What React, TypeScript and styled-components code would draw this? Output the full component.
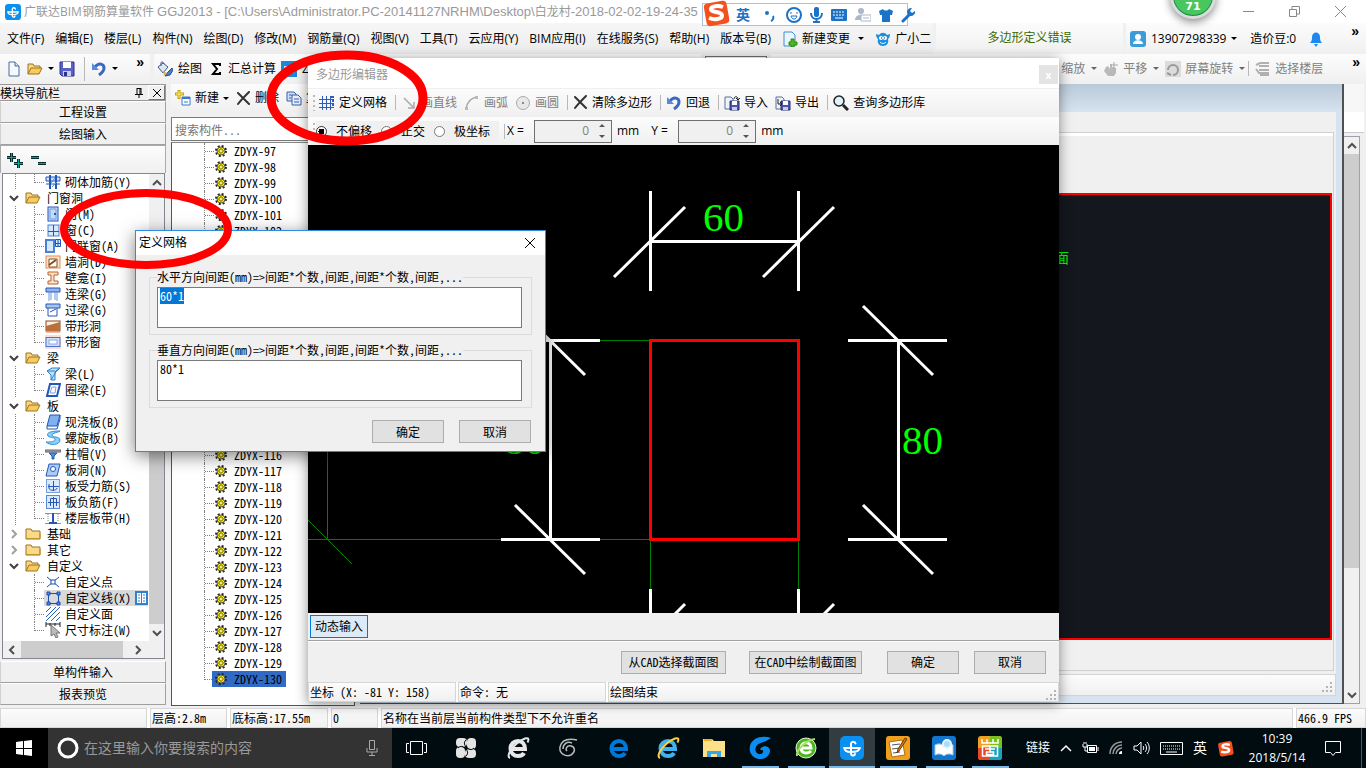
import React, { useEffect, useRef } from 'react';
import styled, { createGlobalStyle, css } from 'styled-components';

const UI = `"Open Sans", "Noto Sans CJK SC", sans-serif`;
const MONO = `"Noto Sans Mono CJK SC", "Noto Sans CJK SC", monospace`;

const GlobalStyle = createGlobalStyle`
  * { box-sizing: border-box; }
  body { margin: 0; background: #f0f0f0; font: 12px/16px ${UI}; color: #000; overflow: hidden; }
  button, input, textarea, select { font: inherit; color: inherit; margin: 0; padding: 0; border: 0; border-radius: 0; background: none; }
  svg { display: block; flex: none; }
`;

/* ---------- shell ---------- */
const Page = styled.div`
  position: relative; display: flex; flex-direction: column; min-height: 100vh; width: 100%;
  white-space: nowrap; overflow: hidden;
`;
const TitleBar = styled.header`
  display: flex; align-items: center; height: 23px; padding: 0 20px 0 5px; gap: 3px; background: #fff; color: #999;
`;
const TitleText = styled.h1`
  flex: 1; margin: 0; font: 12px/20px ${UI}; overflow: hidden;
`;
const Path = styled.span` font-family: "Liberation Sans", sans-serif; font-size: 13px; `;
const WindowButtons = styled.div` display: flex; gap: 35px; button { display: block; } `;

const MenuBar = styled.nav`
  display: flex; align-items: stretch; height: 31px; background: #f0f0f0; gap: 3px;
`;
const strip = css` background: linear-gradient(#fcfcfc, #f0f0f0); `;
const MenuList = styled.div`
  display: flex; flex: 1; align-items: center; gap: 11px; padding: 0 0 0 7px; background: linear-gradient(#f6f6f6, #ececec);
`;
const MenuItem = styled.button` display: flex; align-items: center; gap: 4px; `;
const MessageBox = styled.output` ${strip} width: 187px; padding-top: 7px; text-align: center; color: #3a6a00; `;
const AccountBox = styled.div` ${strip} position: relative; display: flex; align-items: center; width: 240px; padding: 0 7px 0 4px; gap: 5px; `;
const Spacer = styled.span` flex: 1; `;
const More = styled.button` align-self: flex-start; font: bold 14px/16px "Liberation Sans"; `;

const ToolBar = styled.div` display: flex; align-items: stretch; height: 29px; gap: 4px; background: #f0f0f0; `;
const ToolGroup = styled.div<{ $w?: number; $grow?: boolean; $gap?: number; $pad?: number }>`
  ${strip} display: flex; align-items: center; gap: ${p => p.$gap ?? 5}px; padding: 0 6px 0 ${p => p.$pad ?? 6}px;
  width: ${p => (p.$w ? `${p.$w}px` : 'auto')}; flex: ${p => (p.$grow ? '1' : 'none')}; overflow: hidden;
`;
const Tool = styled.button<{ $off?: boolean }>`
  display: flex; align-items: center; gap: 4px; height: 22px; padding: 0 3px; color: ${p => (p.$off ? '#808080' : '#000')};
`;
const Sep = styled.span<{ $h?: number; $tight?: boolean }>`
  width: 1px; height: ${p => p.$h ?? 15}px; margin: ${p => (p.$tight ? '0' : '0 1px 0 4px')}; background: #b8b8b8;
`;
const FloorSelect = styled.select` align-self: flex-start; width: 62px; height: 22px; margin-top: 2px; border: 1px solid #707070; background: #fff; `;

const Main = styled.main` display: flex; flex: 1; min-height: 0; gap: 5px; padding-top: 1px; `;

/* ---------- navigation panel ---------- */
const NavPanel = styled.aside` display: flex; flex-direction: column; width: 166px; flex: none; padding-bottom: 3px; `;
const NavHeader = styled.div`
  display: flex; align-items: center; height: 17px; border: 1px solid #999; border-left: 0; gap: 4px; font-family: ${MONO};
`;
const PanelTitle = styled.h2` flex: 1; margin: 0; font: 12px/14px ${MONO}; `;
const NavClose = styled.button` width: 17px; height: 15px; border: 1px solid #777; border-top-color: #fff; border-left-color: #fff; display: grid; place-items: center; `;
const NavTab = styled.button`
  height: 22px; flex: none; border: 1px solid #a0a0a0; border-top-color: #fff; border-left-color: #d0d0d0; font: 12px/18px ${MONO}; background: #f0f0f0;
`;
const NavTools = styled.div` display: flex; align-items: center; gap: 6px; height: 28px; padding-left: 6px; border: 1px solid #aaa; border-width: 1px 1px 0; ${strip} `;
const TreeBox = styled.div`
  display: flex; flex-direction: column; flex: 1; margin: 0 1px 2px 2px; border: 1px solid #828790; background: #fff; overflow: hidden;
`;
const TreeBody = styled.div` display: flex; flex: 1; min-height: 0; `;
const Tree = styled.ul` flex: 1; margin: 0; padding: 0; list-style: none; overflow: hidden; font: 12px/16px ${MONO}; `;
const Leaf = styled.li<{ $trunk?: boolean }>`
  display: flex; height: 16px; padding-left: 31px; align-items: flex-start;
  background: ${p => (p.$trunk ? 'repeating-linear-gradient(#808080 0 1px, #fff 1px 2px) 12px 0 / 1px 16px no-repeat' : 'none')};
`;
const Branch = styled.span<{ $last?: boolean; $w: number }>`
  width: ${p => p.$w}px; height: ${p => (p.$last ? 9 : 16)}px; flex: none; border-left: 1px dotted #808080;
  background: repeating-linear-gradient(90deg, #808080 0 1px, #fff 1px 2px) 0 8px / 100% 1px no-repeat;
`;
const LeafLabel = styled.span<{ $on?: boolean }>`
  display: flex; align-items: center; height: 16px; gap: 4px; padding-left: 1px; background: ${p => (p.$on ? '#d9d9d9' : 'none')};
`;
const Group = styled.li` display: flex; align-items: center; height: 16px; padding-left: 6px; gap: 6px; `;
const VScroll = styled.div` display: flex; flex-direction: column; width: 15px; background: #f0f0f0; `;
const HScroll = styled.div` display: flex; height: 17px; padding-right: 17px; background: #f0f0f0; `;
const ScrollArrow = styled.button<{ $w?: number }>` display: grid; place-items: center; width: ${p => p.$w ?? 15}px; height: 17px; `;
const Thumb = styled.span<{ $grow: number }>` flex: ${p => p.$grow}; background: #cdcdcd; `;
const Gap = styled.span<{ $grow: number }>` flex: ${p => p.$grow}; `;

/* ---------- component list ---------- */
const ListPanel = styled.section` display: flex; flex-direction: column; width: 184px; flex: none; padding-bottom: 2px; `;
const ListTools = styled.div` ${strip} display: flex; align-items: center; height: 28px; gap: 1px; margin-bottom: 5px; padding-left: 1px; `;
const Search = styled.input` height: 24px; margin-bottom: 1px; padding: 0 3px; border: 1px solid #7a7a7a; background: #fff; font: 12px/16px ${MONO}; &::placeholder { color: #777; opacity: 1; } `;
const ListBox = styled.ul` flex: 1; margin: 0; padding: 0 0 0 32px; list-style: none; border: 1px solid #555; border-top-color: #888; background: #fff; overflow: hidden; font: 12px/16px ${MONO}; `;
const ListRow = styled.li` display: flex; height: 16px; `;
const ListLabel = styled.span<{ $on?: boolean }>`
  display: flex; align-items: center; gap: 7px; padding: 0 4px 0 3px; margin-left: -3px; height: 16px; background: ${p => (p.$on ? '#316ac5' : 'none')};
`;

/* ---------- workspace behind the dialogs ---------- */
const Workspace = styled.section` display: flex; flex: 1; padding-bottom: 4px; `;
const InnerWindow = styled.div` display: flex; flex-direction: column; flex: 1; border-right: 2px solid #505050; border-bottom: 1px solid #505050; background: #d7e3f0; `;
const InnerTitle = styled.div` height: 28px; background: linear-gradient(#bac9d8, #d6e3f0); `;
const InnerBody = styled.div` display: flex; flex: 1; flex-direction: column; margin-right: 6px; padding: 20px 2px 3px 0; background: #f0f0f0; `;
const InnerFrame = styled.div` display: flex; flex: 1; padding: 60px 1px 30px 0; border: 1px solid #d0d0d0; border-left: 0; box-shadow: inset 0 3px #fff; `;
const SectionView = styled.div` flex: 1; border: 2px solid #f00; background: #14171e; color: #0f0; font: 14px/16px ${MONO}; text-align: right; padding: 54px 261px 0 0; `;
const InnerStatus = styled.div` ${strip} display: flex; justify-content: flex-end; align-items: flex-end; height: 22px; margin: 0 6px 7px 0; padding: 2px; border: 1px solid #d4d4d4; `;
const SideColumn = styled.div` display: flex; flex-direction: column; width: 22px; padding-right: 2px; `;
const SideTop = styled.div` height: 49px; border-bottom: 1px solid #ccc; background: linear-gradient(#f7f7f7 28px, #fff 28px); `;
const SideScroll = styled.div` display: flex; flex: 1; flex-direction: column; align-items: stretch; margin: 3px 4px 0 0; border: 1px solid #a0a0a8; border-left: 0; background: #f0f0f0; `;

/* ---------- status bars ---------- */
const StatusBar = styled.footer` display: flex; height: 20px; gap: 3px; background: #fff; font: 12px/18px ${MONO}; `;
const Cell = styled.div<{ $w?: number }>`
  ${strip} width: ${p => (p.$w ? `${p.$w}px` : 'auto')}; flex: ${p => (p.$w ? 'none' : '1')}; padding-left: 1px; border: 1px solid #d6d6d6; overflow: hidden;
`;

/* ---------- dialogs ---------- */
const Editor = styled.section`
  position: absolute; left: 308px; top: 58px; width: 751px; display: flex; flex-direction: column; background: #f0f0f0; box-shadow: 0 2px 12px rgba(0,0,0,.45);
`;
const EditorTitle = styled.div` display: flex; align-items: center; height: 30px; padding: 3px 1px 0 8px; background: #fff; color: #999; `;
const DialogTitle = styled.h2` flex: 1; margin: 0; font: 12px/16px ${UI}; `;
const EditorClose = styled.button` width: 19px; height: 19px; background: #e4e4e4; color: #fff; font: bold 10px/14px ${UI}; `;
const EditorBar = styled.div<{ $h: number }>`
  ${strip} display: flex; align-items: center; height: ${p => p.$h}px; padding-left: 5px; gap: 1px; border-top: 1px solid #f0f0f0;
`;
const Grip = styled.span` width: 2px; height: 16px; background: repeating-linear-gradient(#bbb 0 2px, transparent 2px 5px); `;
const Radios = styled.div` display: flex; align-items: center; height: 20px; width: 183px; gap: 9px; padding: 0; background: #f0f0f0; font-family: ${MONO}; `;
const RadioLabel = styled.label` display: flex; align-items: center; gap: 9px; `;
const Radio = styled.input.attrs({ type: 'radio' })`
  appearance: none; width: 11px; height: 11px; border: 1px solid #777; border-radius: 50%; background: #fff;
  &:checked { background: radial-gradient(#000 0 3px, #fff 3px); border-color: #333; }
`;
const Coord = styled.label` display: flex; align-items: center; gap: 5px; `;
const CoordName = styled.span` width: 22px; `;
const SpinBox = styled.span` display: flex; align-items: center; width: 78px; height: 23px; padding-right: 5px; border: 1px solid #707070; background: #f0f0f0; `;
const SpinInput = styled.input` flex: 1; min-width: 0; text-align: right; padding-right: 10px; color: #808080; `;
const DynamicRow = styled.div` display: flex; align-items: flex-start; height: 28px; padding: 2px; border-bottom: 1px solid #a0a0a0; `;
const DynamicButton = styled.button` width: 58px; height: 23px; border: 1px solid #0078d7; background: #dcebf7; `;
const ButtonRow = styled.div` display: flex; align-items: center; justify-content: flex-end; height: 41px; padding: 0 13px 0 0; border-top: 1px solid #fff; `;
const PushButton = styled.button<{ $w: number; $gap?: number }>`
  width: ${p => p.$w}px; height: 23px; margin-left: ${p => p.$gap ?? 15}px; border: 1px solid #adadad; background: #e1e1e1; font: 12px/18px ${MONO};
`;
const EditorStatus = styled.div` position: relative; display: flex; gap: 2px; height: 20px; background: #fff; font: 12px/18px ${MONO}; white-space: pre; `;
const CornerGrip = styled.span` position: absolute; right: 2px; bottom: 1px; `;

const GridDialog = styled.form`
  position: absolute; left: 135px; top: 230px; width: 411px; border: 1px solid #2d8ce0; background: #f0f0f0; box-shadow: 0 4px 16px rgba(0,0,0,.5);
`;
const GridTitle = styled.div` display: flex; align-items: center; height: 24px; padding: 0 10px 0 3px; background: #fff; `;
const GridBody = styled.div` padding: 14px 13px 8px; `;
const Field = styled.fieldset` height: 66px; margin: 0 0 7px; padding: 2px 9px 0 7px; border: 1px solid #dcdcdc; min-width: 0;
  legend { padding: 0; font: 12px/16px ${MONO}; } `;
const Area = styled.textarea`
  display: block; width: 100%; height: 41px; padding: 0 2px; border: 1px solid #7a7a7a; background: #fff; resize: none; outline: none; font: 12px/16px ${MONO};
  &::selection { background: #0078d7; color: #fff; }
`;
const GridButtons = styled.div` display: flex; justify-content: flex-end; padding: 5px 1px 0 0; `;

/* ---------- floating items ---------- */
const Marks = styled.svg` position: absolute; left: 0; top: 0; pointer-events: none; `;
const ImeBar = styled.div`
  position: absolute; left: 702px; top: 3px; display: flex; align-items: center; gap: 8px; height: 23px; width: 206px; padding-left: 33px;
  border: 1px solid #a9c3dd; background: #fff; color: #1c72c6; font: bold 14px/20px ${UI};
`;
const ImeLogo = styled.span` position: absolute; left: -1px; top: -5px; `;
const Ball = styled.div`
  position: absolute; left: 1170px; top: -27px; width: 46px; height: 46px; border: 3px solid #d9dcdc; border-radius: 50%; background: #48c75e;
  box-shadow: inset 0 0 0 1px #1e8a4d, 0 3px 8px rgba(0,0,0,.45); color: #fff; font: bold 11px/16px "DejaVu Sans"; text-align: center; padding-top: 23px;
`;

/* ---------- task bar ---------- */
const TaskBar = styled.footer` display: flex; height: 40px; background: #000c10; color: #fff; `;
const StartButton = styled.button` display: grid; place-items: center; width: 48px; background: #000; `;
const TaskSearch = styled.label` display: flex; align-items: center; width: 344px; padding: 0 14px 0 9px; gap: 5px; background: #333; `;
const TaskInput = styled.input` flex: 1; min-width: 0; font: 14px/20px ${UI}; outline: none; &::placeholder { color: #999; opacity: 1; } `;
const TaskIcon = styled.button<{ $w?: number; $open?: boolean; $on?: boolean }>`
  display: flex; flex-direction: column; align-items: center; justify-content: center; width: ${p => p.$w ?? 46}px; padding-top: 2px;
  border-bottom: 2px solid transparent; background: ${p => (p.$on ? '#333c40' : 'none')};
  background-image: ${p => (p.$open ? 'linear-gradient(#76b9ed, #76b9ed)' : 'none')};
  background-size: ${p => (p.$on ? '46px' : '37px')} 2px; background-position: 50% 100%; background-repeat: no-repeat; background-origin: border-box; background-clip: border-box;
`;
const Tray = styled.div` display: flex; align-items: center; gap: 10px; `;
const TrayIme = styled.span` font-size: 14px; `;
const Clock = styled.time` display: flex; flex-direction: column; width: 66px; margin-right: 5px; text-align: center; line-height: 19px; `;
const ShowDesktop = styled.button` width: 5px; margin-left: 9px; border-left: 1px solid #555; align-self: stretch; `;
const Room = styled.span<{ $w: number }>` width: ${p => p.$w}px; flex: none; `;

/* ---------- small icons ---------- */
const Svg = ({ w = 16, h = 16, children, ...rest }: { w?: number; h?: number; children: React.ReactNode } & React.SVGProps<SVGSVGElement>) => (
  <svg width={w} height={h} viewBox={`0 0 ${w} ${h}`} fill="none" aria-hidden="true" {...rest}>{children}</svg>
);
const Tri = ({ c = '#000' }: { c?: string }) => <Svg w={6} h={3}><path d="M0 0h6L3 3z" fill={c} /></Svg>;
const Chevron = ({ d, c = '#505050' }: { d: 'up' | 'down' | 'left' | 'right'; c?: string }) => {
  const p = { up: 'M1 7l4-4 4 4', down: 'M1 3l4 4 4-4', left: 'M7 1L3 5l4 4', right: 'M3 1l4 4-4 4' }[d];
  return <Svg w={10} h={10}><path d={p} stroke={c} strokeWidth="2" /></Svg>;
};
const Cross = ({ s = 10, w = 1, c = '#000' }: { s?: number; w?: number; c?: string }) => (
  <Svg w={s} h={s}><path d={`M0 0L${s} ${s}M${s} 0L0 ${s}`} stroke={c} strokeWidth={w} /></Svg>
);
const BigX = () => <Svg w={15} h={15}><path d="M2 2l11 11M13 1C9 5 5 9 2 13" stroke="#333" strokeWidth="2" strokeLinecap="round" /></Svg>;
const Undo = () => <Svg><path d="M4 6c4-5 9-3 9 1 0 3-2 5-5 7" stroke="#3a68c0" strokeWidth="3" /><path d="M1 2v7h7z" fill="#5a8ae0" /></Svg>;
const Dots = () => (
  <Svg w={11} h={11}><path d="M8 0h2v2h-2zM4 4h2v2h-2zM8 4h2v2h-2zM0 8h2v2h-2zM4 8h2v2h-2zM8 8h2v2h-2z" fill="#b4b4b4" /></Svg>
);
const Glodon = ({ s }: { s: number }) => (
  <svg width={s} height={s} viewBox="0 0 24 24" fill="none" aria-hidden="true">
    <rect width="24" height="24" rx="5" fill="#0a90f0" />
    <path d="M11 18V7.500a2.300 2.300 0 0 1 4.500 0M4 12h16M4.500 12c0 3 3 4 6.500 4s8.500 0 8.500-4M11 16v1a2 2 0 0 0 4 1" stroke="#fff" strokeWidth="2" strokeLinecap="round" />
  </svg>
);
const PageIcon = () => <Svg><path d="M3 1h6l4 4v10H3z" fill="#f4f8ff" stroke="#4a6a9c" /><path d="M9 1v4h4" stroke="#4a6a9c" fill="#cfe0f5" /></Svg>;
const FolderOpen = () => (
  <Svg><path d="M1 13V3h5l1 2h6v2" fill="#f6d98a" stroke="#9a7420" /><path d="M1 13l3-6h11l-3 6z" fill="#f9c95a" stroke="#9a7420" /></Svg>
);
const FolderShut = () => <Svg><path d="M1 13V3h5l1 2h8v8z" fill="#fbd98b" stroke="#9a7420" /><path d="M2 12.500h13V7" stroke="#c99320" strokeWidth="1" /></Svg>;
const Save = () => (
  <Svg><path d="M1 1h14v14H3l-2-2z" fill="#5a62c8" stroke="#2a3188" /><path d="M4 1h8v6H4z" fill="#fff" /><path d="M4 10h8v5H4z" fill="#c8ccf0" /><path d="M5 11h3v4H5z" fill="#2a3188" /></Svg>
);
const Bucket = () => (
  <Svg><path d="M1 6l5-4 5 4-5 6z" fill="#dde6f2" stroke="#3a5a8c" /><path d="M4 5V2c0-2 3-1 3 1" stroke="#3a5a8c" /><path d="M15 7l-4 4-3 4 5-1 3-5z" fill="#4a7ed0" stroke="#2a4a8c" /><path d="M6 10l4 2-3 3z" fill="#e8b040" /></Svg>
);
const DiskArrow = ({ out }: { out?: boolean }) => (
  <Svg><path d="M1 2h6l2 2v10H1z" fill="#eef3fa" stroke="#5a7098" /><path d="M6 6h9v9H6z" fill="#4a55a8" stroke="#2a3170" /><path d="M8 6h5v4H8z" fill="#fff" /><path d="M8 12h5v3H8z" fill="#c8ccf0" /><path d={out ? 'M3 4v5h4M5 7l2 2-2 2' : 'M10 4c0-3 4-3 4 0M12 3l2 2 2-2'} stroke="#222" /></Svg>
);
const GridIcon = () => (
  <Svg><path d="M3.500 1v14M7.500 1v14M11.500 1v14M0 4.500h15M0 8.500h15M0 12.500h15" stroke="#2f5cb8" /><path d="M12 2h3M13 6h2M13 10h2" stroke="#2f5cb8" strokeWidth="2" /></Svg>
);
const Gear = () => (
  <Svg w={12} h={12}>
    <circle cx="6" cy="6" r="5" stroke="#222" strokeWidth="2" strokeDasharray="2 1.930" /><circle cx="6" cy="6" r="4" fill="#ffee00" stroke="#555" />
    <path d="M6 3v6M3 6h6" stroke="#6a6000" /><path d="M4 4l4 4M8 4l-4 4" stroke="#a89800" /><circle cx="6" cy="6" r="1" fill="#fff" />
  </Svg>
);
const PlusMinus = ({ minus }: { minus?: boolean }) => (
  <Svg w={17} h={16}>
    {([['#002c2c', 3], ['#00a89c', 1]] as const).map(([c, w]) => (
      <path key={c} d={minus ? 'M1 5.500h8M8 11.500h8' : 'M0 5.500h9M4.500 1v9M7 11.500h9M11.500 7v9'} stroke={c} strokeWidth={w} />
    ))}
  </Svg>
);

const B = '#2456b8';
const leafIcons: Record<string, React.ReactNode> = {
  wall: <><path d="M1 3h14v4H1zM1 10h14" fill="#cfe0fa" stroke={B} /><path d="M5 1v14M11 1v14" stroke={B} strokeWidth="2" /><path d="M6 9l4-5M7 13l5-5" stroke="#4a90e0" /></>,
  door: <><rect x="3" y="1" width="10" height="14" fill="#c5dcf7" stroke={B} /><path d="M5 3h6v10H5z" stroke="#6d9fe0" /><path d="M9 8h2" stroke={B} strokeWidth="2" /></>,
  window: <><rect x="3" y="3" width="11" height="11" fill="#d5e8fc" stroke="#4a80d8" /><path d="M8.500 3v11M3 9.500h11" stroke={B} strokeWidth="1" /></>,
  doorwin: <><rect x="1" y="2" width="8" height="12" fill="#d5e8fc" stroke="#4a80d8" strokeWidth="2" /><path d="M10.500 1.500h5v7h-5zM10 5.500h5M13 2v7" fill="#d5e8fc" stroke={B} /></>,
  hole: <><rect x="1" y="2" width="14" height="12" fill="#fae3cf" stroke="#e08a50" /><path d="M4 5h8v8H4z" fill="#fff" stroke="#8a4a1a" /><path d="M4 11l7-5" stroke="#8a4a1a" strokeWidth="2" /></>,
  niche: <path d="M3 2h10v3H9v6h4v3H3v-3h3V5H3z" fill="#fbe4cc" stroke="#b8622a" />,
  lintel: <><path d="M1 2h14v4H1z" fill="#8fb4ee" stroke={B} /><path d="M4 6v9M12 6v9M6 6v8M10 6v8" stroke="#6a98e0" /></>,
  beam2: <><path d="M1 2h14v4H1z" fill="#a8c6f4" stroke={B} /><path d="M3 6v8h9V6M5 10l6-3" stroke={B} /></>,
  striphole: <><rect x="1" y="3" width="14" height="10" fill="#fdf0e2" stroke="#8a4a1a" /><path d="M1 8l14-4v9H1z" fill="#b9713a" /><path d="M1 14.500h14" stroke="#f8b8a8" /></>,
  stripwin: <><rect x="0" y="1" width="16" height="14" fill="#fbdcd8" /><rect x="1" y="3.500" width="14" height="9" fill="#cfe0fa" stroke="#4a70d0" /><rect x="4" y="6" width="8" height="4" fill="#fff" stroke="#8aa8e8" /></>,
  beam: <><path d="M2 5l5-3h8l-5 4v8H6V9z" fill="#bfe0fa" stroke="#2f80c8" /><path d="M2 5h8M6 14l6-10M10 6l4-3" stroke="#2f80c8" /></>,
  ring: <><path d="M5 2h10l-3 12H2z" fill="#fff" stroke={B} strokeWidth="2" /><path d="M7 5h4l-1 6H5z" stroke="#7aa0e0" /></>,
  slab: <><path d="M5 1h10l-3 11H2z" fill="#7fb0f0" stroke={B} /><path d="M2 12v3h10l3-10V1" stroke={B} /></>,
  spiral: <path d="M15 1C5 1 1 3 3 6c2 2 8 1 7 4-1 2-5 2-9 2 4 4 14 3 14-2 0-4-8-2-8-5 0-2 5-2 8-4z" fill="#8fd0f8" stroke="#2f90d8" />,
  cap: <><path d="M0 4h16v2H0z" fill="#a8a8a8" stroke="#666" /><path d="M4 7h8l-3 3v3H7v-3z" fill="#4a90e0" stroke={B} /></>,
  slabhole: <><path d="M4 2h11l-3 12H1z" fill="#a9ccf8" stroke={B} /><circle cx="8" cy="7" r="2.500" fill="#fff" stroke={B} /></>,
  rebar: <><rect x="1.500" y="1.500" width="13" height="13" fill="#dce9fb" stroke="#7aa0e0" /><path d="M3 8.500h11M8.500 3v10M4 6v4c0 3 8 3 8 0" stroke={B} /></>,
  negbar: <><rect x="1.500" y="1.500" width="13" height="13" fill="#dce9fb" stroke="#5a88d8" /><path d="M3 8.500h11M8.500 3v11M5.500 12V4.500h6V12" stroke={B} /></>,
  strip: <><path d="M0 3.500h16M0 13.500h16" stroke="#6a98e0" /><path d="M8 3v10M4 13h8" stroke={B} strokeWidth="2" /><path d="M3 4v8M13 4v8" stroke="#888" strokeDasharray="1 1" /></>,
  point: <><path d="M2 3l12 10M14 3L2 13" stroke="#1c4fb0" strokeWidth="1" /><rect x="6" y="6" width="4" height="4" fill="#fff" stroke="#1c4fb0" /></>,
  line: <><rect x="3.500" y="3.500" width="10" height="10" stroke="#1c4fb0" /><path d="M2 2h3v3H2zM12 2h3v3h-3zM2 12h3v3H2zM12 12h3v3h-3z" fill="#4a90e8" stroke="#1c4fb0" /></>,
  face: <path d="M1 6l5-5M1 11L11 1M1 15L15 1M6 15l9-9M11 15l4-4" stroke="#2a62c0" />,
  size: <><path d="M1 0v5M15 0v5M1 2h14M5 1v3M10 1v3" stroke="#222" /><path d="M6 3v11l3-2 2 4 2-1-2-4h4z" fill="#bbb" stroke="#777" /></>,
};

type Row = { t: string; k?: string; last?: boolean; open?: boolean; shut?: boolean; on?: boolean; lone?: boolean };
const tree: Row[] = [
  { t: '砌体加筋(Y)', k: 'wall', last: true },
  { t: '门窗洞', open: true },
  { t: '门(M)', k: 'door' }, { t: '窗(C)', k: 'window' }, { t: '门联窗(A)', k: 'doorwin' }, { t: '墙洞(D)', k: 'hole' },
  { t: '壁龛(I)', k: 'niche' }, { t: '连梁(G)', k: 'lintel' }, { t: '过梁(G)', k: 'beam2' }, { t: '带形洞', k: 'striphole' },
  { t: '带形窗', k: 'stripwin', last: true },
  { t: '梁', open: true },
  { t: '梁(L)', k: 'beam' }, { t: '圈梁(E)', k: 'ring', last: true },
  { t: '板', open: true },
  { t: '现浇板(B)', k: 'slab' }, { t: '螺旋板(B)', k: 'spiral' }, { t: '柱帽(V)', k: 'cap' }, { t: '板洞(N)', k: 'slabhole' },
  { t: '板受力筋(S)', k: 'rebar' }, { t: '板负筋(F)', k: 'negbar' }, { t: '楼层板带(H)', k: 'strip', last: true },
  { t: '基础', shut: true }, { t: '其它', shut: true }, { t: '自定义', open: true },
  { t: '自定义点', k: 'point', lone: true }, { t: '自定义线(X)', k: 'line', lone: true, on: true },
  { t: '自定义面', k: 'face', lone: true }, { t: '尺寸标注(W)', k: 'size', lone: true, last: true },
];

const TreeRow = ({ r }: { r: Row }) => r.k ? (
  <Leaf $trunk={!r.lone}>
    <Branch $w={10} $last={r.last} />
    <LeafLabel $on={r.on}>
      <Svg>{leafIcons[r.k]}</Svg>{r.t}
      {r.on && <Svg w={13} h={14}><rect x="0" y="0" width="13" height="14" fill="#2f80d0" /><path d="M2 2h4v10H2zM7 2h4v10H7z" fill="#fff" /><path d="M3 4h2M3 7h2M3 10h2M8 4h2M8 7h2M8 10h2" stroke="#2f80d0" /></Svg>}
    </LeafLabel>
  </Leaf>
) : (
  <Group><Chevron d={r.shut ? 'right' : 'down'} c={r.shut ? '#a0a0a0' : '#404040'} />{r.shut ? <FolderShut /> : <FolderOpen />}<span>{r.t}</span></Group>
);

const menus = ['文件(F)', '编辑(E)', '楼层(L)', '构件(N)', '绘图(D)', '修改(M)', '钢筋量(Q)', '视图(V)', '工具(T)', '云应用(Y)', 'BIM应用(I)', '在线服务(S)', '帮助(H)', '版本号(B)'];
const components = Array.from({ length: 34 }, (_, i) => `ZDYX-${97 + i}`);

/* Section drawing with its dimension lines */
const Drawing = () => (
  <svg width="100%" height="468" viewBox="308 145 751 468" preserveAspectRatio="xMinYMin slice" fill="none">
    <rect x="308" y="145" width="751" height="468" fill="#000" />
    <g stroke="#008000" strokeWidth="1">
      <path d="M546 340.500H650M308 539.500H650M327.500 340V540M650.500 540V589M798.500 540V589M308 520L352 564" />
    </g>
    <g stroke="#fff" strokeWidth="3">
      <path d="M650.500 191V291M798.500 191V291M650 241.500H798M685 207L614 277M834 207L763 277" />
      <path d="M848 340.500H947M848 539.500H947M898.500 340V540M863 306L933 375M863 505L933 574" />
      <path d="M501 340.500H600M501 539.500H600M550.500 340V540M515 306L585 375M515 505L585 574" />
      <path d="M650.500 589V613M798.500 589V613M685 604L675 614M834 604L824 614" />
    </g>
    <rect x="650.500" y="340.500" width="148" height="199" stroke="#f00" strokeWidth="3" />
    <g fill="#0f0" fontFamily="Liberation Serif, serif" fontSize="41">
      <text x="703" y="231">60</text><text x="902" y="454">80</text><text x="504" y="454">80</text>
    </g>
  </svg>
);

const Coordinate = ({ name }: { name: string }) => (
  <Coord>
    <CoordName>{name} =</CoordName>
    <SpinBox>
      <SpinInput defaultValue="0" aria-label={name} />
      <Svg w={7} h={16}><path d="M0 4l3-3 3 3zM0 12l3 3 3-3z" fill="#555" /></Svg>
    </SpinBox>
    mm
  </Coord>
);

const SogouMark = ({ s }: { s: number }) => (
  <svg width={s} height={s} viewBox="0 0 28 28" fill="none" aria-hidden="true">
    <rect x="3" y="3" width="23" height="23" rx="4" fill="#f4511e" transform="rotate(-10 14 14)" />
    <path d="M21 8c-5-2-12-1-12 2.500C9 14 20 12 20 16.500c0 4-8 4.500-13 2.500" stroke="#fff" strokeWidth="4" />
  </svg>
);

const EMark = ({ c, ring }: { c: string; ring?: string }) => (
  <Svg w={24} h={24}>
    <path d="M5 13h14c0-5-3-8-7-8s-7.500 3-7.500 7.500S8 20 12 20c3 0 5-1 6-3" stroke={c} strokeWidth="4" />
    {ring && <path d="M4 22C-1 20 8 7 19 2.500c4-1 4 1 2.500 4" stroke={ring} strokeWidth="2" />}
  </Svg>
);

export default function App() {
  const first = useRef<HTMLTextAreaElement>(null);
  useEffect(() => { first.current?.focus(); first.current?.select(); }, []);
  return (
    <Page>
      <GlobalStyle />
      <TitleBar>
        <Glodon s={16} />
        <TitleText>广联达BIM钢筋算量软件 <Path>GGJ2013 - [C:\Users\Administrator.PC-20141127NRHM\Desktop\</Path>白龙村<Path>-2018-02-02-19-24-35</Path></TitleText>
        <WindowButtons>
          <button aria-label="最小化"><Svg w={11} h={11}><path d="M0 5.500h11" stroke="#888" /></Svg></button>
          <button aria-label="还原"><Svg w={11} h={11}><path d="M.5 3.500h7v7h-7zM3 3V.5h7.500V8H8" stroke="#888" /></Svg></button>
          <button aria-label="关闭"><Cross s={11} c="#888" /></button>
        </WindowButtons>
      </TitleBar>

      <MenuBar>
        <MenuList>
          {menus.map(m => <MenuItem key={m}>{m}</MenuItem>)}
          <MenuItem>
            <Svg><path d="M2 1h8l3 3v11H2z" fill="#eaf5ff" stroke="#3f8fd0" /><path d="M9 8h3v3h3v3h-3v2H9v-2H7v-3h2z" fill="#4cb81c" stroke="#2f8a10" /></Svg>
            新建变更<Spacer /><Tri />
          </MenuItem>
          <MenuItem>
            <Svg><path d="M1 3l3 1c2-3 6-3 8 0l3-1c0 3-1 4-2 5 1 4-1 7-5 7s-6-3-5-7C2 7 1 6 1 3z" fill="#1c8fe0" /><circle cx="6" cy="7" r="2" fill="#fff" /><circle cx="10" cy="7" r="2" fill="#fff" /><path d="M6 7h1M9 7h1" stroke="#123" /><path d="M5 11c2 2 4 2 6 0" stroke="#fff" /></Svg>
            广小二
          </MenuItem>
        </MenuList>
        <MessageBox>多边形定义错误</MessageBox>
        <AccountBox>
          <Svg><rect width="16" height="16" rx="3" fill="#3a9cd8" /><circle cx="8" cy="6" r="3" fill="#fff" /><path d="M3 13c0-5 10-5 10 0z" fill="#fff" /></Svg>
          13907298339 <Tri /> <Spacer /> 造价豆:0
          <Spacer /><Svg w={14} h={16}><path d="M1 12c2-2 2-4 2-6 0-6 8-6 8 0 0 2 0 4 2 6zM5 13h4l-2 3z" fill="#1c88f0" /></Svg>
          <Spacer /><Spacer /><Spacer /><More aria-label="更多">»</More>
        </AccountBox>
      </MenuBar>

      <ToolBar>
        <ToolGroup $w={150}>
          <PageIcon /><FolderOpen /><Tri /><Save /><Sep $h={24} /><Undo /><Tri /><Spacer /><More aria-label="更多">»</More>
        </ToolGroup>
        <ToolGroup $w={547} $pad={3}>
          <Bucket />绘图 <Svg w={16} h={12}><path d="M13 3V1H6l4 5-4 5h7V9" stroke="#000" strokeWidth="2" /></Svg> 汇总计算
          <Svg><rect width="16" height="16" fill="#1c88d8" /><path d="M3 5h10v7H3z" fill="#bfe3fa" /></Svg>ZK
        </ToolGroup>
        <FloorSelect aria-label="楼层"><option>首层</option></FloorSelect>
        <ToolGroup $grow $gap={3}>
          <Spacer />
          <Tool $off>缩放</Tool><Tri c="#666" />
          <Tool $off><Svg><path d="M3 6l2-1 2 3V3h2v3l4 1v5l-2 3H5l-4-5z" fill="#b9b9b9" /><path d="M11 1v7M8 4h7" stroke="#aaa" /></Svg>平移</Tool><Tri c="#666" />
          <Tool $off><Svg><rect width="16" height="16" fill="#dcdcdc" /><path d="M3 9a5 5 0 1 1 5 5M2 12l4 2" stroke="#999" strokeWidth="2" /></Svg>屏幕旋转</Tool><Tri c="#666" />
          <Sep $tight />
          <Tool $off><Svg><path d="M1 4l4-2h9M4 5h10M4 9h10M1 8l3 4h10M5 14h9" stroke="#b0b0b0" strokeWidth="2" /></Svg>选择楼层</Tool>
          <Room $w={20} /><More aria-label="更多">»</More>
        </ToolGroup>
      </ToolBar>

      <Main>
        <NavPanel>
          <NavHeader>
            <PanelTitle>模块导航栏</PanelTitle>
            <Svg w={9} h={10}><path d="M2 0v6M6 0v6M2 .5h4M0 6.500h8M4 6v4M5 0v6" stroke="#000" /></Svg>
            <NavClose aria-label="关闭导航栏"><Cross s={8} /></NavClose>
          </NavHeader>
          <NavTab>工程设置</NavTab>
          <NavTab>绘图输入</NavTab>
          <NavTools><PlusMinus /><PlusMinus minus /></NavTools>
          <TreeBox>
            <TreeBody>
              <Tree>{tree.map((r, i) => <TreeRow key={i} r={r} />)}</Tree>
              <VScroll><ScrollArrow aria-label="上"><Chevron d="up" /></ScrollArrow><Gap $grow={6} /><Thumb $grow={5} /><ScrollArrow aria-label="下"><Chevron d="down" /></ScrollArrow></VScroll>
            </TreeBody>
            <HScroll><ScrollArrow $w={18} aria-label="左"><Chevron d="left" /></ScrollArrow><Thumb $grow={17} /><Gap $grow={1} /><ScrollArrow $w={18} aria-label="右"><Chevron d="right" /></ScrollArrow></HScroll>
          </TreeBox>
          <NavTab>单构件输入</NavTab>
          <NavTab>报表预览</NavTab>
        </NavPanel>

        <ListPanel>
          <ListTools>
            <Tool><Svg><path d="M4 0v9M0 4h9" stroke="#c8a000" strokeWidth="3" /><path d="M4 1v7M1 4h7" stroke="#fff080" /><path d="M7 7h8v8H7z" fill="#fff" stroke="#3a78d0" /><path d="M7 8h8" stroke="#3a78d0" strokeWidth="2" /><path d="M9 12h4" stroke="#3a78d0" /></Svg>新建<Tri /></Tool>
            <Tool><BigX />删除</Tool>
            <Tool><Svg><path d="M1 2h7l2 2v7H1z" fill="#cfe0fa" stroke="#3a60a8" /><path d="M6 5h6l3 3v7H6z" fill="#e6f0ff" stroke="#3a60a8" /><path d="M8 9h5M8 12h5M3 5h3M3 8h2" stroke="#3a60a8" /></Svg>复制</Tool>
          </ListTools>
          <Search placeholder="搜索构件..." aria-label="搜索构件" />
          <ListBox>
            {components.map((c, i) => (
              <ListRow key={c}><Branch $w={11} $last={i === 33} /><ListLabel $on={i === 33}><Gear />{c}</ListLabel></ListRow>
            ))}
          </ListBox>
        </ListPanel>

        <Workspace>
          <InnerWindow>
            <InnerTitle />
            <InnerBody><InnerFrame><SectionView>截面</SectionView></InnerFrame></InnerBody>
            <InnerStatus><Dots /></InnerStatus>
          </InnerWindow>
          <SideColumn>
            <SideTop />
            <SideScroll>
              <ScrollArrow aria-label="上"><Chevron d="up" /></ScrollArrow><Thumb $grow={7} /><Gap $grow={2} /><ScrollArrow aria-label="下"><Chevron d="down" /></ScrollArrow>
            </SideScroll>
          </SideColumn>
        </Workspace>
      </Main>

      <StatusBar>
        <Cell $w={147} /><Cell $w={77}>层高:2.8m</Cell><Cell $w={98}>底标高:17.55m</Cell><Cell $w={47}>0</Cell>
        <Cell>名称在当前层当前构件类型下不允许重名</Cell><Cell $w={70}>466.9 FPS</Cell>
      </StatusBar>

      <TaskBar>
        <StartButton aria-label="开始"><Svg><path d="M0 2l7-1v7H0zM8 1l8-1v8H8zM0 9h7v6l-7-1zM8 9h8v7l-8-1z" fill="#fff" /></Svg></StartButton>
        <TaskSearch>
          <Svg w={22} h={22}><circle cx="11" cy="11" r="9" stroke="#fff" strokeWidth="3" /></Svg>
          <TaskInput placeholder="在这里输入你要搜索的内容" />
          <Svg w={12} h={18}><path d="M3.500 1.500h5v9h-5zM1 9v4h10V9M6 13v4M3 16.500h6" stroke="#aaa" /></Svg>
        </TaskSearch>
        <TaskIcon $w={48} aria-label="任务视图"><Svg w={21} h={14}><path d="M4.500.5h12v13h-12zM3 2.500H.5v9H3M18 2.500h2.500v9H18" stroke="#fff" /></Svg></TaskIcon>
        <TaskIcon $w={52} aria-label="风扇"><Svg w={22} h={22}><g fill="#e4e4e4"><rect x="1" y="1" width="11" height="9" rx="4" /><rect x="12" y="1" width="9" height="11" rx="4" /><rect x="10" y="12" width="11" height="9" rx="4" /><rect x="1" y="10" width="9" height="11" rx="4" /></g><path d="M3 11c3-3 5-1 8 0s5 3 8 0M11 3c-3 3-1 5 0 8s3 5 0 8" stroke="#000c10" strokeWidth="1" /></Svg></TaskIcon>
        <TaskIcon $w={51} aria-label="浏览器"><EMark c="#e8e8e8" ring="#e8e8e8" /></TaskIcon>
        <TaskIcon $w={50} aria-label="广联达"><Svg w={20} h={20}><path d="M19 2c-5-1-15-2-17 7-1 7 6 10 11 8 5-3 4-8 0-9s-6 3-4 5M14 5C9 3 5 6 5 11" stroke="#bbb" strokeWidth="1.500" /></Svg></TaskIcon>
        <TaskIcon $w={52} aria-label="Edge"><EMark c="#0078d7" /></TaskIcon>
        <TaskIcon aria-label="IE"><EMark c="#3fb0f0" ring="#f8d040" /></TaskIcon>
        <TaskIcon aria-label="文件夹"><Svg w={22} h={20}><path d="M0 1h9l2 2h11v16H0z" fill="#ffe08a" /><path d="M4 19v-6h14v6h-4v-3H8v3z" fill="#35a8e8" /><path d="M1 1h8v2H1z" fill="#f0b020" /></Svg></TaskIcon>
        <TaskIcon $open aria-label="G+"><Svg w={24} h={24}><path d="M23 2C14-1 4 2 2 10c-2 8 5 14 12 13 6-1 10-7 7-11-3-3-8-2-9 2 4-1 4 3 1 4-4 1-7-3-5-7C10 6 17 7 23 2z" fill="#0a8cf0" /></Svg></TaskIcon>
        <TaskIcon $open aria-label="360"><Svg w={24} h={24}><circle cx="12" cy="12" r="10" fill="#4cb820" stroke="#e8f8d8" /><path d="M7 12h10c0-7-10-7-10 0 0 6 7 6 10 3" stroke="#fff" strokeWidth="3" /><path d="M3 20C2 14 12 4 21 3" stroke="#a8e060" strokeWidth="2" /></Svg></TaskIcon>
        <TaskIcon $open $on aria-label="GGJ2013"><Glodon s={24} /></TaskIcon>
        <TaskIcon $open aria-label="写字板"><Svg w={24} h={24}><rect width="24" height="24" rx="3" fill="#f0a01c" /><path d="M3 6l13-2 3 15-13 2z" fill="#fff" stroke="#b86a10" /><path d="M6 9l8-1M6 13l8-1M7 17l7-1" stroke="#555" /><path d="M21 3l-8 12-2 2 1-4 7-11z" fill="#d87a10" stroke="#703a00" /></Svg></TaskIcon>
        <TaskIcon $open aria-label="图书"><Svg w={24} h={24}><rect width="24" height="24" rx="3" fill="#1276d0" /><path d="M3 9c4-2 7-1 9 1 2-2 5-3 9-1v10c-4-2-7-1-9 1-2-2-5-3-9-1z" fill="#fff" stroke="#a8c8e8" /><circle cx="15" cy="8" r="4" fill="#a8dcff" stroke="#e8f4ff" strokeWidth="2" /></Svg></TaskIcon>
        <TaskIcon $open aria-label="图集"><Svg w={24} h={24}><rect width="24" height="24" rx="3" fill="#f0a020" /><path d="M12 0h9a3 3 0 0 1 3 3v9H12z" fill="#78c020" /><path d="M12 12h12v9a3 3 0 0 1-3 3h-9z" fill="#18a0c0" /><path d="M0 12h12v12H3a3 3 0 0 1-3-3z" fill="#e84828" /><path d="M4 3v4h16V3M9 3v4M15 3v4M4.500 10h15v10h-15zM7 13h10M12 10v6M8.500 16h7v2.500h-7z" stroke="#fff" strokeWidth="1.500" /></Svg></TaskIcon>
        <Spacer />
        <Tray>
          链接
          <Svg w={12} h={8}><path d="M1 7l5-5 5 5" stroke="#fff" strokeWidth="1.500" /></Svg>
          <Svg w={17} h={12}><path d="M5.500 3.500h9v7h-9zM16 5v4M1 2v3h4V2M2 0v2M4 0v2M3 5v4h2" stroke="#fff" /><path d="M7 5h6v4H7z" fill="#fff" /></Svg>
          <Svg w={14} h={14}><path d="M1 13C1 6 6 1 13 1M4 13c0-5 4-9 9-9M7 13c0-3 3-6 6-6" stroke="#999" strokeWidth="1.500" /><path d="M10 13c0-2 1-3 3-3v3z" fill="#fff" /></Svg>
          <Svg w={17} h={14}><path d="M1 5v4h3l4 4V1L4 5zM10 5c1 1 1 3 0 4M12 3c2 2 2 6 0 8M14 1c3 3 3 9 0 12" stroke="#fff" /></Svg>
          <Svg w={23} h={13}><path d="M.5.5h22v12H.5z" stroke="#fff" /><path d="M3 4h17M3 7h17" stroke="#fff" strokeDasharray="1 1" /><path d="M6 10h11" stroke="#fff" /></Svg>
          <TrayIme>英</TrayIme><SogouMark s={17} />
          <Clock><span>10:39</span><span>2018/5/14</span></Clock>
          <Svg w={17} h={17}><path d="M.5 1.500h15v11h-5l-2.500 3-2.500-3h-5z" stroke="#fff" /></Svg>
          <ShowDesktop aria-label="显示桌面" />
        </Tray>
      </TaskBar>

      <Editor role="dialog" aria-label="多边形编辑器">
        <EditorTitle><DialogTitle>多边形编辑器</DialogTitle><EditorClose aria-label="关闭">x</EditorClose></EditorTitle>
        <EditorBar $h={28}>
          <Grip />
          <Tool><GridIcon />定义网格</Tool><Sep />
          <Tool $off><Svg><path d="M3 3l9 9M13 7v6H7" stroke="#aaa" strokeWidth="1.500" /></Svg>画直线</Tool>
          <Tool $off><Svg><path d="M2 14C3 7 7 3 13 2" stroke="#aaa" strokeWidth="1.500" /><path d="M1 12h3v3H1zM11 1h3v3h-3z" fill="#bbb" /></Svg>画弧</Tool>
          <Tool $off><Svg><circle cx="8" cy="8" r="6.500" fill="#e8e8e8" stroke="#aaa" /><path d="M7 8h2" stroke="#888" strokeWidth="2" /></Svg>画圆</Tool><Sep />
          <Tool><BigX />清除多边形</Tool><Sep />
          <Tool><Undo />回退</Tool><Sep />
          <Tool><DiskArrow />导入</Tool>
          <Tool><DiskArrow out />导出</Tool><Sep />
          <Tool><Svg><circle cx="6" cy="6" r="5" fill="#dff2fc" stroke="#222" strokeWidth="1.500" /><path d="M10 10l5 5" stroke="#222" strokeWidth="3" /></Svg>查询多边形库</Tool>
        </EditorBar>
        <EditorBar $h={29}>
          <Grip />
          <Radios>
            <RadioLabel><Radio name="mode" defaultChecked />不偏移</RadioLabel>
            <RadioLabel><Radio name="mode" />正交</RadioLabel>
            <RadioLabel><Radio name="mode" />极坐标</RadioLabel>
          </Radios>
          <Sep />
          <Coordinate name="X" /><Room $w={10} /><Coordinate name="Y" />
        </EditorBar>
        <Drawing />
        <DynamicRow><DynamicButton>动态输入</DynamicButton></DynamicRow>
        <ButtonRow>
          <PushButton $w={105}>从CAD选择截面图</PushButton>
          <PushButton $w={113} $gap={23}>在CAD中绘制截面图</PushButton>
          <PushButton $w={72} $gap={25}>确定</PushButton>
          <PushButton $w={72}>取消</PushButton>
        </ButtonRow>
        <EditorStatus>
          <Cell $w={148}>坐标 (X: -81 Y: 158)</Cell><Cell $w={148}>命令: 无</Cell><Cell>绘图结束</Cell>
          <CornerGrip><Dots /></CornerGrip>
        </EditorStatus>
      </Editor>

      <GridDialog role="dialog" aria-label="定义网格" onSubmit={e => e.preventDefault()}>
        <GridTitle><DialogTitle>定义网格</DialogTitle><button type="button" aria-label="关闭"><Cross s={10} /></button></GridTitle>
        <GridBody>
          <Field><legend>水平方向间距(mm)=&gt;间距*个数,间距,间距*个数,间距,...</legend><Area ref={first} defaultValue="60*1" aria-label="水平方向间距" spellCheck={false} /></Field>
          <Field><legend>垂直方向间距(mm)=&gt;间距*个数,间距,间距*个数,间距,...</legend><Area defaultValue="80*1" aria-label="垂直方向间距" spellCheck={false} /></Field>
          <GridButtons><PushButton $w={72}>确定</PushButton><PushButton $w={72} type="button">取消</PushButton></GridButtons>
        </GridBody>
      </GridDialog>

      <ImeBar>
        <ImeLogo><SogouMark s={28} /></ImeLogo>
        <span>英</span>
        <Svg w={20}><circle cx="9" cy="6" r="2" fill="#1c72c6" /><path d="M15 9c1 2 0 4-2 5" stroke="#1c72c6" strokeWidth="2" /></Svg>
        <Svg><circle cx="8" cy="8" r="7" stroke="#1c72c6" strokeWidth="2" /><path d="M5 9c1 4 5 4 6 0zM5 5v2M11 5v2" stroke="#1c72c6" /></Svg>
        <Svg w={13}><rect x="4" y="0" width="5" height="10" rx="2" fill="#1c72c6" /><path d="M1 6c0 8 11 8 11 0M6.500 12v4M3 15h7" stroke="#1c72c6" strokeWidth="2" /></Svg>
        <Svg><rect x="0" y="2" width="16" height="12" rx="1" fill="#1c72c6" /><path d="M2 5h12M2 8h12" stroke="#fff" strokeDasharray="2 1" /><path d="M4 11h8" stroke="#fff" /></Svg>
        <Svg><circle cx="6" cy="4" r="3" fill="#aab8c8" /><path d="M0 13c0-7 12-7 12 0z" fill="#aab8c8" /><path d="M6 8h10v6H6z" fill="#fff" stroke="#aab8c8" /><path d="M8 11h6" stroke="#aab8c8" /></Svg>
        <Svg w={14}><path d="M4 2c1 2 5 2 6 0l4 2-1 4h-2v7H3V8H1L0 4z" fill="#1c72c6" /></Svg>
        <Svg><path d="M2 14l7-7" stroke="#1c72c6" strokeWidth="3" strokeLinecap="round" /><path d="M14 4a4 4 0 1 1-3-3L9 4l2 2z" fill="#1c72c6" /></Svg>
      </ImeBar>
      <Ball>71</Ball>

      <Marks width="460" height="280" fill="none" stroke="#f00">
        <ellipse cx="347" cy="98" rx="76" ry="43" strokeWidth="9" />
        <ellipse cx="146" cy="229" rx="82" ry="36" strokeWidth="8" />
      </Marks>
    </Page>
  );
}
